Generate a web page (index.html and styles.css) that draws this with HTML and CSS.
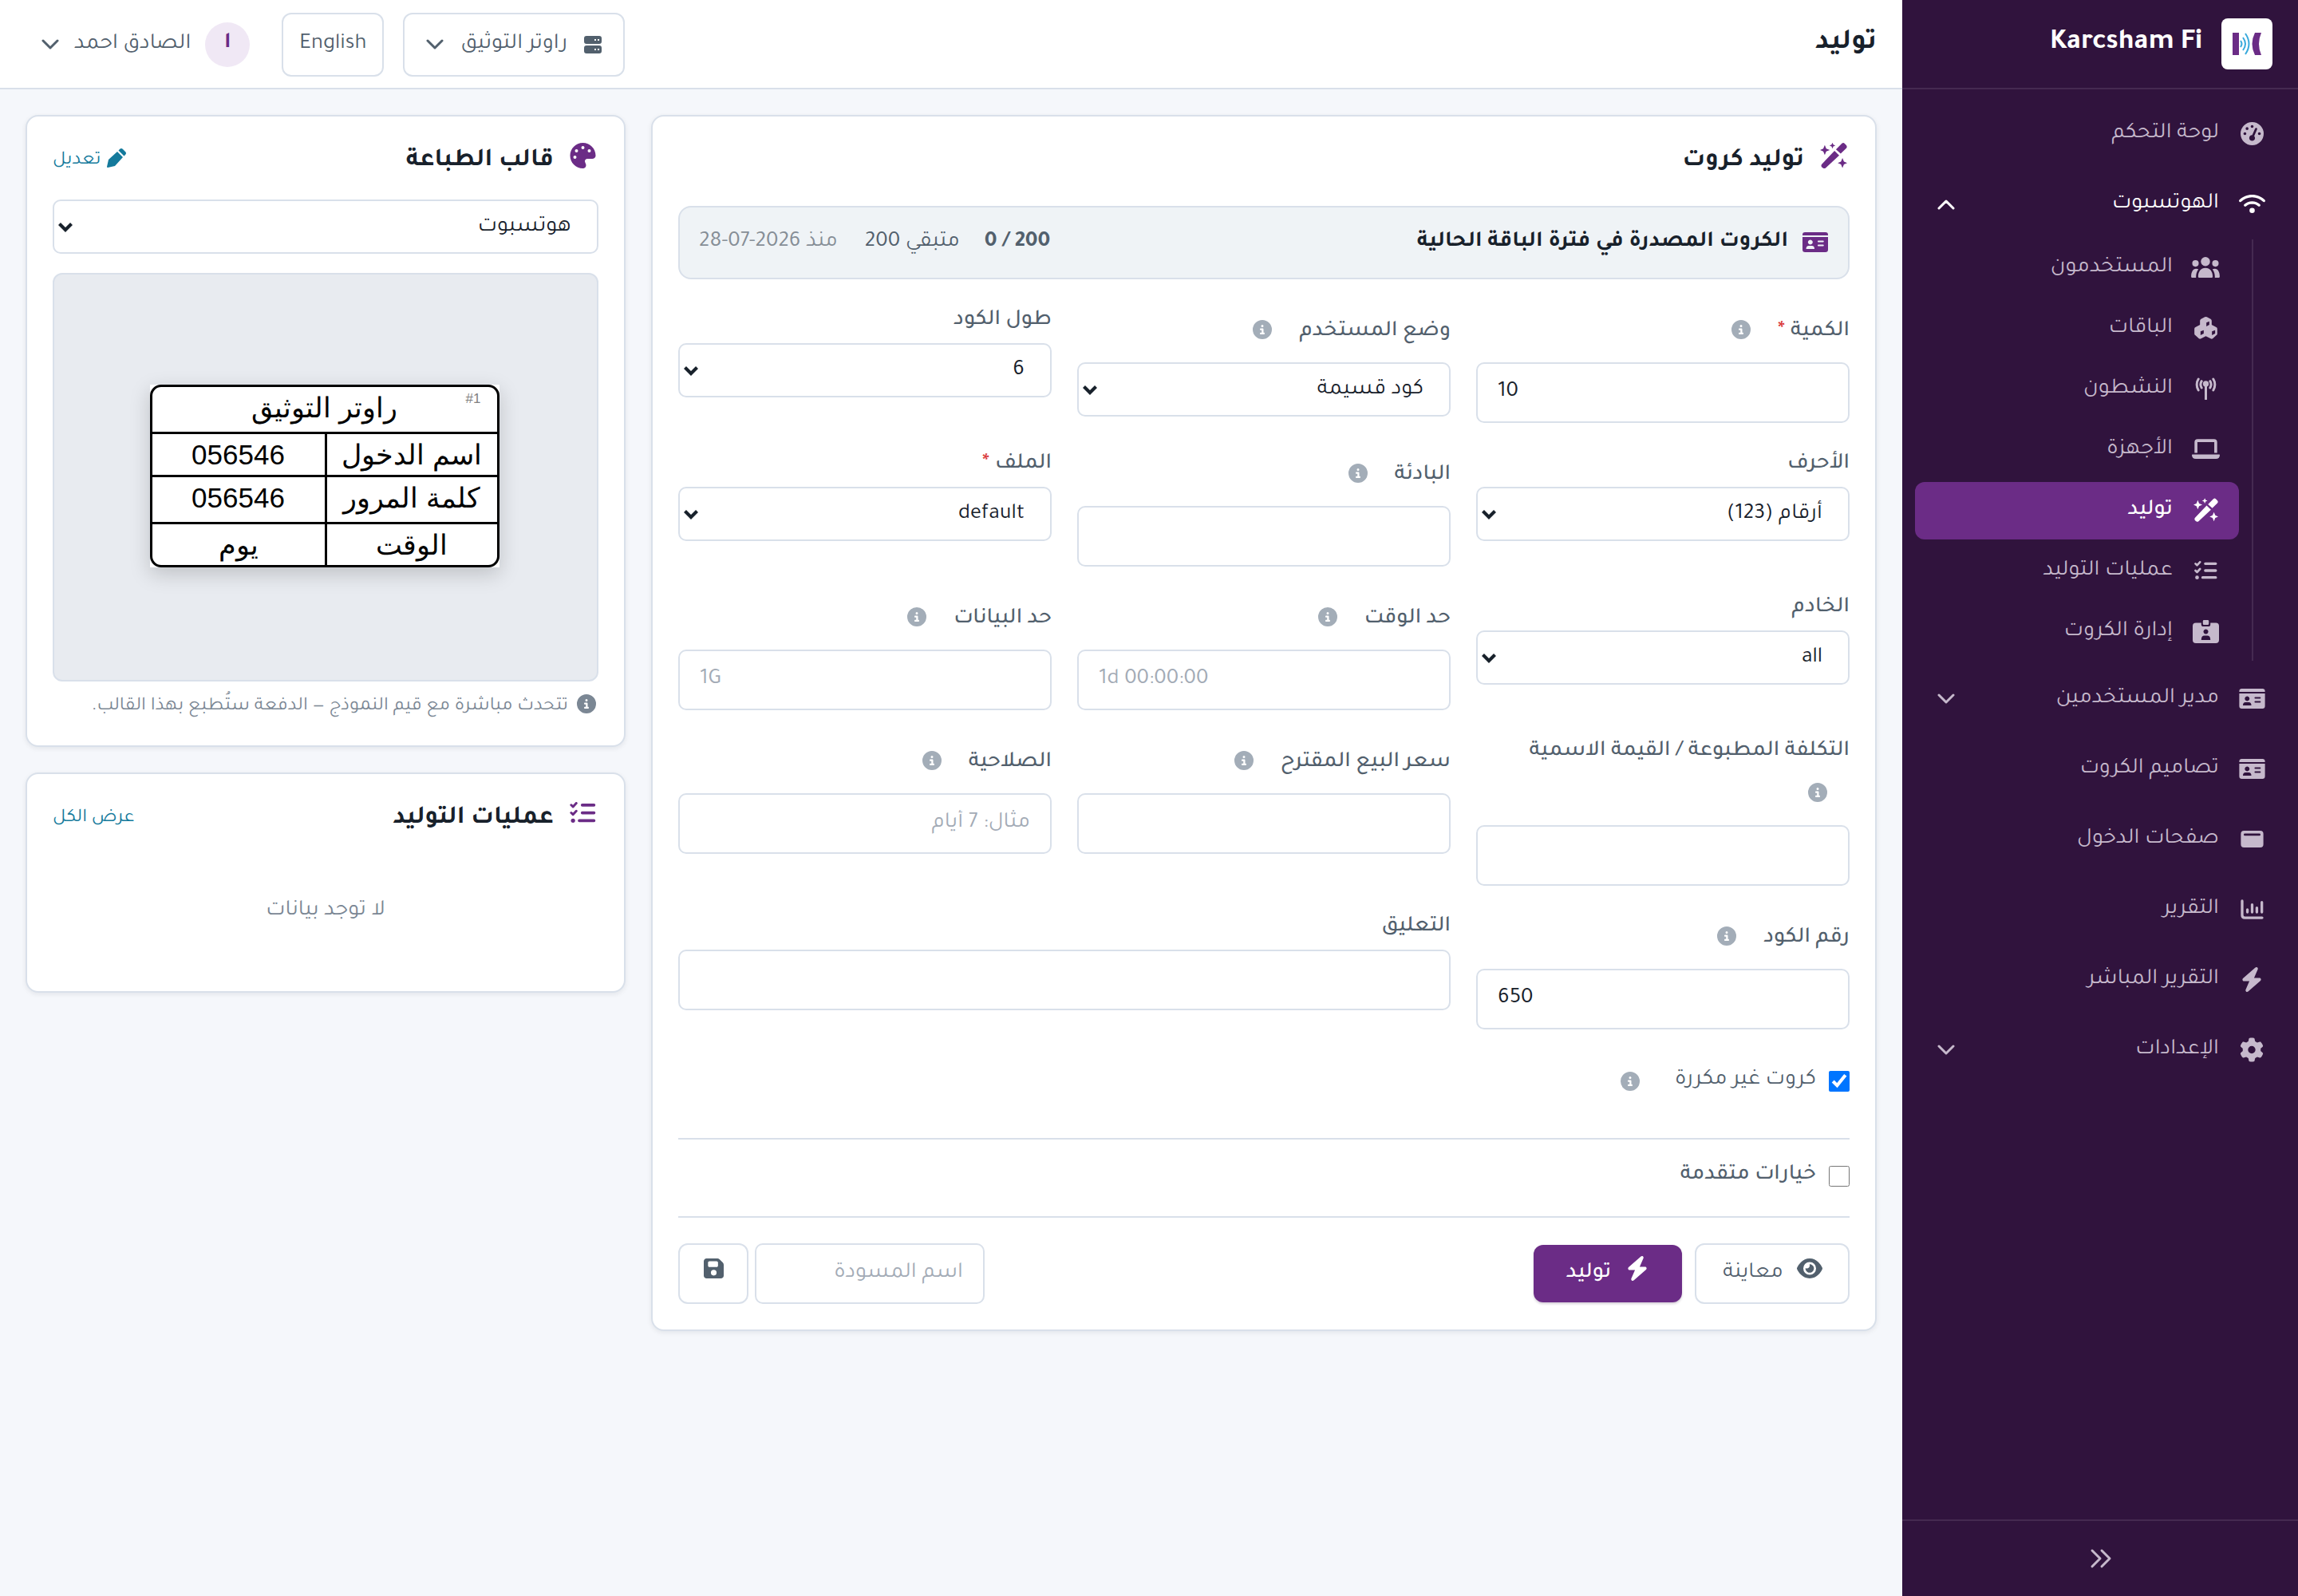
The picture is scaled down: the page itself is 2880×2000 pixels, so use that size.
FILE: index.html
```html
<!DOCTYPE html>
<html lang="ar" dir="rtl">

<head>
    <meta charset="UTF-8" />
    <meta name="viewport" content="width=device-width, initial-scale=1.0" />
    <title>توليد - Karcsham Fi</title>
    <link rel="stylesheet" href="styles.css">
</head>

<body>
    <svg class="sprite" aria-hidden="true">
        <symbol id="i-gauge" viewBox="0 0 512 512"><path d="M0 256a256 256 0 1 1 512 0A256 256 0 1 1 0 256zM288 96a32 32 0 1 0 -64 0 32 32 0 1 0 64 0zM256 416c35.3 0 64-28.7 64-64c0-17.4-6.9-33.1-18.1-44.6L366 161.7c5.3-12.1-.2-26.3-12.3-31.6s-26.3 .2-31.6 12.3L257.9 288c-.6 0-1.3 0-1.9 0c-35.3 0-64 28.7-64 64s28.7 64 64 64zM176 144a32 32 0 1 0 -64 0 32 32 0 1 0 64 0zM96 288a32 32 0 1 0 0-64 32 32 0 1 0 0 64zm352-32a32 32 0 1 0 -64 0 32 32 0 1 0 64 0z"/></symbol>
        <symbol id="i-wifi" viewBox="0 0 640 512"><path d="M54.2 202.9C123.2 136.7 216.8 96 320 96s196.8 40.7 265.8 106.9c12.8 12.2 33 11.8 45.2-.9s11.8-33-.9-45.2C549.7 79.5 440.4 32 320 32S90.3 79.5 9.8 156.7C-2.9 169-3.3 189.2 8.9 202s32.5 13.2 45.2 .9zM320 256c56.8 0 108.6 21.1 148.2 56c13.3 11.7 33.5 10.4 45.2-2.8s10.4-33.5-2.8-45.2C459.8 219.2 393 192 320 192s-139.8 27.2-190.5 72c-13.3 11.7-14.5 31.9-2.8 45.2s31.9 14.5 45.2 2.8c39.5-34.9 91.3-56 148.2-56zm64 160a64 64 0 1 0 -128 0 64 64 0 1 0 128 0z"/></symbol>
        <symbol id="i-users" viewBox="0 0 106 77"><circle cx="53" cy="17" r="17"/><circle cx="16" cy="24" r="12"/><circle cx="90" cy="24" r="12"/><path d="M26 73c0-18 10-32 27-32s27 14 27 32q0 4-4 4H30q-4 0-4-4zM0 73c0-17 7-29 18-29c4 0 7 1 9 2c-6 8-9 17-9 27v4H4q-4 0-4-4zM106 73c0-17-7-29-18-29c-4 0-7 1-9 2c6 8 9 17 9 27v4h14q4 0 4-4z"/></symbol>
        <symbol id="i-cubes" viewBox="0 0 86 84"><path fill-rule="evenodd" d="M39 1q4-2 8 0l14 7q4 2 4 7v15l17 9q4 2 4 6v19q0 4-4 6L69 82q-4 2-8 0L43 73 25 82q-4 2-8 0L4 70q-4-2-4-6V45q0-4 4-6l17-9V15q0-5 4-7zM45 22v14l11-6V17zM23 55v14l12-6V50zM66 55v14l12-6V50z"/></symbol>
        <symbol id="i-tower" viewBox="0 0 92 84"><circle cx="46" cy="24" r="11"/><path d="M46 26v54M18 4c-8 12-8 30 0 42M30 12c-5 8-5 17 0 25M74 4c8 12 8 30 0 42M62 12c5 8 5 17 0 25" transform="translate(0 2)" fill="none" stroke="currentColor" stroke-width="9" stroke-linecap="round"/></symbol>
        <symbol id="i-laptop" viewBox="0 0 106 77"><path fill-rule="evenodd" d="M10 52V12Q10 0 22 0H84Q96 0 96 12V52H85V11H21V52zM0 60q0-2 2-2H104q2 0 2 2Q106 75 91 75H15Q0 75 0 60z"/></symbol>
        <symbol id="i-wand" viewBox="0 0 92 88"><path d="M6 73q-4 5 0 10l4 3q4 3 9 0L65 43 49 28zM54 23l16 14L89 19q4-5 0-10l-6-6q-4-4-9 0z"/><path d="M16 8l5 12 12 5-12 5-5 12-5-12-11-5 11-5zM42 0l3 7 7 3-7 3-3 7-3-7-7-3 7-3zM76 52l5 12 11 5-11 5-5 12-5-12-11-5 11-5z"/></symbol>
        <symbol id="i-list" viewBox="0 0 86 72"><g fill="none" stroke="currentColor" stroke-linecap="round" stroke-linejoin="round"><path stroke-width="10" d="M41 10H80M41 36H80M31 62H80"/><path stroke-width="8" d="M4 10l6 6L21 4M4 36l6 6L21 30"/></g><circle cx="10" cy="62" r="7"/></symbol>
        <symbol id="i-badge" viewBox="0 0 98 86"><path fill-rule="evenodd" d="M38 4q0-4 4-4H56q4 0 4 4V14q0 4-4 4H42q-4 0-4-4zM12 10H32v6q0 8 8 8H58q8 0 8-8V10H86Q98 10 98 22V74Q98 86 86 86H12Q0 86 0 74V22Q0 10 12 10zM49 34a9 9 0 1 0 .1 0zM32 74H66Q66 58 54 58H44Q32 58 32 74z"/></symbol>
        <symbol id="i-idcard" viewBox="0 0 98 76"><path fill-rule="evenodd" d="M0 10Q0 0 10 0H88Q98 0 98 10v2H0zM0 18H98V66Q98 76 88 76H10Q0 76 0 66zM30 29a9 9 0 1 0 .1 0zM14 64H46Q46 52 36 52H24Q14 52 14 64zM61 32q-3 0-3 3t3 3H79q3 0 3-3t-3-3zM61 47q-3 0-3 3t3 3H79q3 0 3-3t-3-3z"/></symbol>
        <symbol id="i-window" viewBox="0 0 86 64"><path fill-rule="evenodd" d="M12 0H74Q86 0 86 12V52Q86 64 74 64H12Q0 64 0 52V12Q0 0 12 0zM15 11q-4 0-4 4t4 4H71q4 0 4-4t-4-4z"/></symbol>
        <symbol id="i-chart" viewBox="0 0 86 76"><g fill="none" stroke="currentColor" stroke-linecap="round"><path stroke-width="10" d="M5 6V60Q5 70 15 70H81"/><path stroke-width="10" d="M25 39V49M43 20V49M61 32V49M80 11V49"/></g></symbol>
        <symbol id="i-bolt" viewBox="0 0 448 512"><path d="M349.4 44.6c5.9-13.7 1.5-29.7-10.6-38.5s-28.6-8-39.9 1.8l-256 224c-10 8.8-13.6 22.9-8.9 35.3S50.7 288 64 288H175.5L98.6 467.4c-5.9 13.7-1.5 29.7 10.6 38.5s28.6 8 39.9-1.8l256-224c10-8.8 13.6-22.9 8.9-35.3s-16.6-20.7-30-20.7H272.5L349.4 44.6z"/></symbol>
        <symbol id="i-gear" viewBox="0 0 512 512"><path d="M495.9 166.6c3.2 8.7 .5 18.4-6.4 24.6l-43.3 39.4c1.1 8.3 1.7 16.8 1.7 25.4s-.6 17.1-1.7 25.4l43.3 39.4c6.9 6.2 9.6 15.9 6.4 24.6c-4.4 11.9-9.7 23.3-15.8 34.3l-4.7 8.1c-6.6 11-14 21.4-22.1 31.2c-5.9 7.2-15.7 9.6-24.5 6.8l-55.7-17.7c-13.4 10.3-28.2 18.9-44 25.4l-12.5 57.1c-2 9.1-9 16.3-18.2 17.8c-13.8 2.3-28 3.5-42.5 3.5s-28.7-1.2-42.5-3.5c-9.2-1.5-16.2-8.7-18.2-17.8l-12.5-57.1c-15.8-6.5-30.6-15.1-44-25.4L83.1 425.9c-8.8 2.8-18.6 .3-24.5-6.8c-8.1-9.8-15.5-20.2-22.1-31.2l-4.7-8.1c-6.1-11-11.4-22.4-15.8-34.3c-3.2-8.7-.5-18.4 6.4-24.6l43.3-39.4C64.6 273.1 64 264.6 64 256s.6-17.1 1.7-25.4L22.4 191.2c-6.9-6.2-9.6-15.9-6.4-24.6c4.4-11.9 9.7-23.3 15.8-34.3l4.7-8.1c6.6-11 14-21.4 22.1-31.2c5.9-7.2 15.7-9.6 24.5-6.8l55.7 17.7c13.4-10.3 28.2-18.9 44-25.4l12.5-57.1c2-9.1 9-16.3 18.2-17.8C227.3 1.2 241.5 0 256 0s28.7 1.2 42.5 3.5c9.2 1.5 16.2 8.7 18.2 17.8l12.5 57.1c15.8 6.5 30.6 15.1 44 25.4l55.7-17.7c8.8-2.8 18.6-.3 24.5 6.8c8.1 9.8 15.5 20.2 22.1 31.2l4.7 8.1c6.1 11 11.4 22.4 15.8 34.3zM256 336a80 80 0 1 0 0-160 80 80 0 1 0 0 160z"/></symbol>
        <symbol id="i-palette" viewBox="0 0 512 512"><path d="M512 256c0 .9 0 1.8 0 2.7c-.4 36.5-33.6 61.3-70.1 61.3H344c-26.5 0-48 21.5-48 48c0 3.4 .4 6.7 1 9.9c2.1 10.2 6.5 20 10.8 29.9c6.1 13.8 12.1 27.5 12.1 42c0 31.8-21.6 60.7-53.4 62c-3.5 .1-7 .2-10.6 .2C114.6 512 0 397.4 0 256S114.6 0 256 0S512 114.6 512 256zM128 288a32 32 0 1 0 -64 0 32 32 0 1 0 64 0zm0-96a32 32 0 1 0 0-64 32 32 0 1 0 0 64zM288 96a32 32 0 1 0 -64 0 32 32 0 1 0 64 0zm96 96a32 32 0 1 0 0-64 32 32 0 1 0 0 64z"/></symbol>
        <symbol id="i-info" viewBox="0 0 512 512"><path d="M256 512A256 256 0 1 0 256 0a256 256 0 1 0 0 512zM216 336h24V272H216c-13.3 0-24-10.7-24-24s10.7-24 24-24h48c13.3 0 24 10.7 24 24v88h8c13.3 0 24 10.7 24 24s-10.7 24-24 24H216c-13.3 0-24-10.7-24-24s10.7-24 24-24zm40-208a32 32 0 1 1 0 64 32 32 0 1 1 0-64z"/></symbol>
        <symbol id="i-save" viewBox="0 32 448 448"><path d="M64 32C28.7 32 0 60.7 0 96V416c0 35.3 28.7 64 64 64H384c35.3 0 64-28.7 64-64V173.3c0-17-6.7-33.3-18.7-45.3L352 50.7C340 38.7 323.7 32 306.7 32H64zm32 96c0-17.7 14.3-32 32-32H288c17.7 0 32 14.3 32 32v64c0 17.7-14.3 32-32 32H128c-17.7 0-32-14.3-32-32V128zM224 288a64 64 0 1 1 0 128 64 64 0 1 1 0-128z"/></symbol>
        <symbol id="i-eye" viewBox="0 32 576 448"><path d="M288 32c-80.8 0-145.5 36.8-192.6 80.6C48.6 156 17.3 208 2.5 243.7c-3.3 7.9-3.3 16.7 0 24.6C17.3 304 48.6 356 95.4 399.4C142.5 443.2 207.2 480 288 480s145.5-36.8 192.6-80.6c46.8-43.5 78.1-95.4 93-131.1c3.3-7.9 3.3-16.7 0-24.6c-14.9-35.7-46.2-87.7-93-131.1C433.5 68.8 368.8 32 288 32zM144 256a144 144 0 1 1 288 0 144 144 0 1 1 -288 0zm144-64c0 35.3-28.7 64-64 64c-7.1 0-13.9-1.2-20.3-3.3c-5.5-1.8-11.9 1.6-11.7 7.4c.3 6.9 1.3 13.8 3.2 20.7c13.7 51.2 66.4 81.6 117.6 67.9s81.6-66.4 67.9-117.6c-11.1-41.5-47.8-69.4-88.6-71.1c-5.8-.2-9.2 6.1-7.4 11.7c2.1 6.4 3.3 13.2 3.3 20.3z"/></symbol>
        <symbol id="i-server" viewBox="0 0 22 22"><path fill-rule="evenodd" d="M3 0H19Q22 0 22 3V7Q22 10 19 10H3Q0 10 0 7V3Q0 0 3 0zM3 12H19Q22 12 22 15V19Q22 22 19 22H3Q0 22 0 19V15Q0 12 3 12zM13 4V6H15V4zM17 4V6H19V4zM13 16V18H15V16zM17 16V18H19V16z"/></symbol>
        <symbol id="i-pen" viewBox="0 0 24 24"><path d="M2 14L13 4l7 7L10 22 1 24q-1 0-1-1zM14.500 2.500L16 1q2-2 4 0l3 3q2 2 0 4l-1.500 1.500z"/></symbol>
        <symbol id="i-down" viewBox="0 0 22 14"><path d="M2 2l9 9 9-9" fill="none" stroke="currentColor" stroke-width="3" stroke-linecap="round" stroke-linejoin="round"/></symbol>
        <symbol id="i-up" viewBox="0 0 22 14"><path d="M2 12l9-9 9 9" fill="none" stroke="currentColor" stroke-width="3" stroke-linecap="round" stroke-linejoin="round"/></symbol>
        <symbol id="i-arrow" viewBox="0 0 20 14"><path d="M2.500 2.500L10 10l7.500-7.500" fill="none" stroke="currentColor" stroke-width="4.200"/></symbol>
        <symbol id="i-next" viewBox="0 0 28 26"><path d="M3 3l10 10L3 23M15 3l10 10-10 10" fill="none" stroke="currentColor" stroke-width="3" stroke-linecap="round" stroke-linejoin="round"/></symbol>
    </svg>

    <div class="app">
        <aside class="sidebar">
            <div class="brand">
                <div class="logo">
                    <svg viewBox="0 0 64 64">
                        <path fill="#6b2c86" d="M14 18h8v28h-8zM42 18h8q-6 14 0 28h-8q-7-14 0-28z"/>
                        <path fill="none" stroke="#38a9dc" stroke-width="2" d="M24 28q3 4 0 8M27 24q6 8 0 16M30 19q9 13 0 26"/>
                    </svg>
                </div>
                <span>Karcsham Fi</span>
            </div>
            <nav class="nav">
                <a class="item"><span class="ico"><svg width="29" height="29"><use href="#i-gauge"/></svg></span>لوحة التحكم</a>
                <a class="item open"><span class="ico"><svg width="33" height="27"><use href="#i-wifi"/></svg></span>الهوتسبوت<svg class="caret" width="22" height="14"><use href="#i-up"/></svg></a>
                <div class="sub">
                    <a class="item"><span class="ico"><svg width="36" height="26"><use href="#i-users"/></svg></span>المستخدمون</a>
                    <a class="item"><span class="ico"><svg width="29" height="28"><use href="#i-cubes"/></svg></span>الباقات</a>
                    <a class="item"><span class="ico"><svg width="31" height="28"><use href="#i-tower"/></svg></span>النشطون</a>
                    <a class="item"><span class="ico"><svg width="35" height="26"><use href="#i-laptop"/></svg></span>الأجهزة</a>
                    <a class="item active"><span class="ico"><svg width="31" height="30"><use href="#i-wand"/></svg></span>توليد</a>
                    <a class="item"><span class="ico"><svg width="29" height="24"><use href="#i-list"/></svg></span>عمليات التوليد</a>
                    <a class="item"><span class="ico"><svg width="33" height="29"><use href="#i-badge"/></svg></span>إدارة الكروت</a>
                </div>
                <a class="item"><span class="ico"><svg width="33" height="25"><use href="#i-idcard"/></svg></span>مدير المستخدمين<svg class="caret" width="22" height="14"><use href="#i-down"/></svg></a>
                <a class="item"><span class="ico"><svg width="33" height="25"><use href="#i-idcard"/></svg></span>تصاميم الكروت</a>
                <a class="item"><span class="ico"><svg width="29" height="21"><use href="#i-window"/></svg></span>صفحات الدخول</a>
                <a class="item"><span class="ico"><svg width="29" height="25"><use href="#i-chart"/></svg></span>التقرير</a>
                <a class="item"><span class="ico"><svg width="28" height="31"><use href="#i-bolt"/></svg></span>التقرير المباشر</a>
                <a class="item"><span class="ico"><svg width="30" height="31"><use href="#i-gear"/></svg></span>الإعدادات<svg class="caret" width="22" height="14"><use href="#i-down"/></svg></a>
            </nav>
            <div class="collapse"><svg width="28" height="26"><use href="#i-next"/></svg></div>
        </aside>

        <main class="main">
            <header class="topbar">
                <h1>توليد</h1>
                <button class="btn router"><svg width="22" height="22"><use href="#i-server"/></svg><span>راوتر التوثيق</span><svg class="caret" width="22" height="14"><use href="#i-down"/></svg></button>
                <button class="btn lang">English</button>
                <div class="user"><span class="avatar">ا</span><span>الصادق احمد</span><svg class="caret" width="22" height="14"><use href="#i-down"/></svg></div>
            </header>

            <div class="content">
                <section class="card form-card">
                    <div class="card-head"><h2><svg width="34" height="34"><use href="#i-wand"/></svg>توليد كروت</h2></div>
                    <div class="quota">
                        <svg width="32" height="25"><use href="#i-idcard"/></svg>
                        <strong>الكروت المصدرة في فترة الباقة الحالية</strong>
                        <b dir="ltr">0 / 200</b>
                        <span>متبقي 200</span>
                        <span class="muted">منذ <bdi dir="ltr">28-07-2026</bdi></span>
                    </div>

                    <div class="fields">
                        <div class="field"><label class="hint">الكمية<em>*</em><svg class="info"><use href="#i-info"/></svg></label><input type="text" dir="ltr" value="10"></div>
                        <div class="field"><label class="hint">وضع المستخدم<svg class="info"><use href="#i-info"/></svg></label><div class="select">كود قسيمة<svg><use href="#i-arrow"/></svg></div></div>
                        <div class="field"><label>طول الكود</label><div class="select">6<svg><use href="#i-arrow"/></svg></div></div>

                        <div class="field"><label>الأحرف</label><div class="select">أرقام (123)<svg><use href="#i-arrow"/></svg></div></div>
                        <div class="field"><label class="hint">البادئة<svg class="info"><use href="#i-info"/></svg></label><input type="text" dir="ltr"></div>
                        <div class="field"><label>الملف<em>*</em></label><div class="select">default<svg><use href="#i-arrow"/></svg></div></div>

                        <div class="field"><label>الخادم</label><div class="select">all<svg><use href="#i-arrow"/></svg></div></div>
                        <div class="field"><label class="hint">حد الوقت<svg class="info"><use href="#i-info"/></svg></label><input type="text" dir="ltr" placeholder="1d 00:00:00"></div>
                        <div class="field"><label class="hint">حد البيانات<svg class="info"><use href="#i-info"/></svg></label><input type="text" dir="ltr" placeholder="1G"></div>

                        <div class="field"><label class="wrap">التكلفة المطبوعة / القيمة الاسمية<svg class="info"><use href="#i-info"/></svg></label><input type="text" dir="ltr"></div>
                        <div class="field"><label class="hint">سعر البيع المقترح<svg class="info"><use href="#i-info"/></svg></label><input type="text" dir="ltr"></div>
                        <div class="field"><label class="hint">الصلاحية<svg class="info"><use href="#i-info"/></svg></label><input type="text" placeholder="مثال: 7 أيام"></div>

                        <div class="field"><label class="hint">رقم الكود<svg class="info"><use href="#i-info"/></svg></label><input type="text" dir="ltr" value="650"></div>
                        <div class="field wide"><label>التعليق</label><input type="text"></div>
                    </div>

                    <div class="check unique"><input type="checkbox" checked><span>كروت غير مكررة</span><svg class="info"><use href="#i-info"/></svg></div>
                    <div class="check advanced"><input type="checkbox"><span>خيارات متقدمة</span></div>

                    <div class="actions">
                        <button class="btn preview-btn"><svg width="32" height="25"><use href="#i-eye"/></svg>معاينة</button>
                        <button class="btn primary"><svg width="30" height="31"><use href="#i-bolt"/></svg>توليد</button>
                        <input class="draft" type="text" placeholder="اسم المسودة">
                        <button class="btn save"><svg width="25" height="25"><use href="#i-save"/></svg></button>
                    </div>
                </section>

                <div class="side">
                    <section class="card template-card">
                        <div class="card-head"><h2><svg width="33" height="32"><use href="#i-palette"/></svg>قالب الطباعة</h2><a class="link"><svg width="24" height="24"><use href="#i-pen"/></svg>تعديل</a></div>
                        <div class="select">هوتسبوت<svg><use href="#i-arrow"/></svg></div>
                        <div class="preview">
                            <div class="voucher">
                                <div class="voucher-inner">
                                    <div class="cell full">راوتر التوثيق<small dir="ltr">#1</small></div>
                                    <div class="cell">اسم الدخول</div><div class="cell">056546</div>
                                    <div class="cell">كلمة المرور</div><div class="cell">056546</div>
                                    <div class="cell">الوقت</div><div class="cell">يوم</div>
                                </div>
                            </div>
                        </div>
                        <p class="note"><svg width="24" height="24"><use href="#i-info"/></svg>تتحدث مباشرة مع قيم النموذج — الدفعة ستُطبع بهذا القالب.</p>
                    </section>
                    <section class="card jobs-card">
                        <div class="card-head"><h2><svg width="33" height="27"><use href="#i-list"/></svg>عمليات التوليد</h2><a class="link">عرض الكل</a></div>
                        <p class="empty">لا توجد بيانات</p>
                    </section>
                </div>
            </div>
        </main>
    </div>
</body>

</html>
```
FILE: styles.css
```css
:root {
    --primary: #6b2c86;
    --sidebar: #30133d;
    --bg: #f5f7fb;
    --border: #d9e0ea;
    --text: #18212b;
    --label: #52606d;
    --muted: #7b8794;
    --link: #147a9c;
}

* {
    margin: 0;
    padding: 0;
    box-sizing: border-box;
}

body {
    font-family: 'Tajawal', 'Noto Sans', sans-serif;
    font-size: 28px;
    line-height: 44px;
    background: var(--bg);
    color: var(--text);
}

svg {
    fill: currentColor;
    flex: none;
    display: block;
}

.sprite {
    display: none;
}

input,
button {
    font: inherit;
    color: inherit;
}

.app {
    display: flex;
    height: 2000px;
}

/* Sidebar */
.sidebar {
    width: 496px;
    background: var(--sidebar);
    color: #c6b9cc;
    display: flex;
    flex-direction: column;
}

.brand {
    height: 112px;
    padding: 0 32px;
    display: flex;
    align-items: center;
    gap: 24px;
    border-bottom: 2px solid #452a51;
    color: #fff;
    font-size: 36px;
    font-weight: 700;
}

.logo {
    width: 64px;
    height: 64px;
    background: #fff;
    border-radius: 8px;
}

.nav {
    flex: 1;
    padding: 14px 16px;
}

.item {
    display: flex;
    align-items: center;
    height: 84px;
    margin-bottom: 4px;
    padding: 0 24px 0 28px;
}

.ico {
    width: 36px;
    margin-left: 23px;
    padding-bottom: 2px;
    display: flex;
    justify-content: center;
}

.item .caret {
    margin: 0 auto 0 0;
}

.open {
    color: #fff;
    margin-bottom: 2px;
}

.sub {
    margin: 0 40px 6px 0;
    padding-right: 16px;
    border-right: 2px solid #452a51;
}

.sub .item {
    height: 72px;
    border-radius: 12px;
}

.sub .item:last-child {
    margin-bottom: 0;
}

.sub .active {
    background: var(--primary);
    color: #fff;
    font-weight: 500;
}

.collapse {
    height: 96px;
    padding-left: 2px;
    border-top: 2px solid #452a51;
    display: flex;
    align-items: center;
    justify-content: center;
}

/* Top bar */
.main {
    flex: 1;
}

.topbar {
    height: 112px;
    padding: 2px 32px 0 52px;
    background: #fff;
    border-bottom: 2px solid var(--border);
    display: flex;
    align-items: center;
}

h1 {
    font-size: 36px;
    font-weight: 700;
    margin-left: auto;
    padding-bottom: 2px;
}

.btn {
    display: flex;
    align-items: center;
    justify-content: center;
    border: 2px solid var(--border);
    border-radius: 12px;
    background: #fff;
    color: var(--label);
}

.router {
    width: 278px;
    height: 80px;
    gap: 21px;
}

.lang {
    width: 128px;
    height: 80px;
    margin: 0 24px 0 40px;
}

.user {
    display: flex;
    align-items: center;
    gap: 18px;
    color: var(--label);
}

.avatar {
    width: 56px;
    height: 56px;
    border-radius: 50%;
    background: #f0e8f5;
    color: var(--primary);
    font-weight: 700;
    text-align: center;
    line-height: 54px;
}

.user .caret {
    margin-right: 1px;
}

/* Cards */
.content {
    padding: 32px;
    display: flex;
    align-items: flex-start;
    gap: 32px;
}

.card {
    background: #fff;
    border: 2px solid var(--border);
    border-radius: 16px;
    padding: 32px;
    box-shadow: 0 2px 6px rgba(16, 24, 40, 0.08);
}

.form-card {
    flex: 1;
    height: 1524px;
}

.side {
    width: 752px;
    display: flex;
    flex-direction: column;
    gap: 32px;
}

.card-head {
    height: 48px;
    display: flex;
    align-items: center;
    justify-content: space-between;
}

h2 {
    font-size: 32px;
    font-weight: 700;
    padding-right: 3px;
    display: flex;
    align-items: center;
    gap: 20px;
}

h2 svg {
    color: var(--primary);
    margin-bottom: 14px;
}

.quota {
    margin: 32px 0 24px;
    height: 92px;
    padding: 0 25px 0 24px;
    background: #eff3f6;
    border: 2px solid var(--border);
    border-radius: 16px;
    display: flex;
    align-items: center;
    gap: 34px;
    color: var(--label);
}

.quota svg {
    color: var(--primary);
    margin: 0 0 2px -16px;
}

.quota strong {
    color: var(--text);
    margin-left: auto;
}

.quota b {
    margin-left: -3px;
}

.muted {
    color: #868e96;
}

/* Form */
.fields {
    display: grid;
    grid-template-columns: repeat(3, 1fr);
    gap: 24px 32px;
}

.wide {
    grid-column: span 2;
}

label {
    display: flex;
    height: 56px;
    padding-top: 6px;
    color: var(--label);
    font-weight: 500;
}

label em {
    color: #d93636;
    font-style: normal;
    margin-right: 7px;
}

.info {
    width: 24px;
    height: 24px;
    color: #a3adb8;
    margin-right: 34px;
}

.hint {
    height: 80px;
    padding-top: 20px;
}

.hint .info {
    margin-top: 7px;
}

.wrap {
    height: 120px;
    flex-wrap: wrap;
    align-content: flex-start;
}

.wrap .info {
    margin: 17px 28px 0;
}

input[type="text"] {
    width: 100%;
    height: 76px;
    padding: 0 25px;
    border: 2px solid var(--border);
    border-radius: 10px;
    background: #fff;
    display: block;
}

input::placeholder {
    color: #a3abb6;
}

.select {
    height: 68px;
    padding: 2px 32px 0 3px;
    border: 2px solid var(--border);
    border-radius: 10px;
    display: flex;
    align-items: center;
    justify-content: space-between;
}

.select svg {
    width: 20px;
    height: 14px;
    margin-left: 1px;
}

.check {
    display: flex;
    align-items: center;
    color: var(--label);
}

.check input {
    width: 26px;
    height: 26px;
    margin-left: 16px;
}

.check span {
    padding-bottom: 2px;
}

.check .info {
    margin-right: 44px;
}

.unique {
    height: 138px;
    padding: 0 0 6px;
    border-bottom: 2px solid var(--border);
}

.advanced {
    height: 98px;
    padding-bottom: 5px;
    border-bottom: 2px solid var(--border);
    font-weight: 500;
}

.actions {
    margin-top: 32px;
    display: flex;
    align-items: center;
}

.preview-btn {
    width: 194px;
    height: 76px;
    padding-left: 1px;
    gap: 17px;
    margin-left: 16px;
}

.actions .btn svg {
    margin-bottom: 14px;
}

.primary {
    width: 186px;
    height: 72px;
    gap: 18px;
    margin-left: auto;
    border: none;
    background: var(--primary);
    color: #fff;
    font-weight: 500;
    box-shadow: 0 2px 3px rgba(48, 19, 61, 0.2);
}

.actions .draft {
    width: 288px;
    margin-left: 8px;
}

.save {
    width: 88px;
    height: 76px;
}

/* Print template */
.template-card {
    height: 792px;
}

.template-card .select {
    margin-top: 24px;
}

.link {
    color: var(--link);
    font-size: 24px;
    display: flex;
    align-items: center;
    gap: 8px;
}

.link svg {
    margin-bottom: 8px;
}

.preview {
    margin-top: 24px;
    height: 512px;
    padding: 0 3px 4px 0;
    background: #e8ebf0;
    border: 2px solid var(--border);
    border-radius: 12px;
    display: flex;
    align-items: center;
    justify-content: center;
}

.voucher {
    width: 438px;
    height: 229px;
    background: #fff;
    box-shadow: 0 8px 24px rgba(0, 0, 0, 0.18);
}

.voucher-inner {
    height: 229px;
    border: 3px solid #000;
    border-radius: 14px;
    display: grid;
    grid-template-columns: 1fr 1fr;
    grid-template-rows: 59px 54px 59px 51px;
    font: 35px/52px "Liberation Sans", sans-serif;
    color: #000;
}

.cell {
    text-align: center;
    border-bottom: 3px solid #000;
    border-left: 3px solid #000;
    white-space: nowrap;
}

.cell:nth-child(odd) {
    border-left: none;
}

.cell.full {
    grid-column: span 2;
    position: relative;
}

.cell:nth-last-child(-n+2) {
    border-bottom: none;
}

.cell small {
    position: absolute;
    top: 5px;
    right: 20px;
    font-size: 17px;
    line-height: 20px;
    color: #808080;
}

.note {
    margin-top: 10px;
    padding-right: 3px;
    font-size: 24px;
    color: var(--muted);
    display: flex;
    align-items: center;
    gap: 11px;
}

.note svg {
    margin-bottom: 8px;
}

.jobs-card {
    height: 276px;
}

.jobs-card .card-head {
    padding-bottom: 1px;
}

.empty {
    margin-top: 70px;
    text-align: center;
    color: var(--muted);
}
```
